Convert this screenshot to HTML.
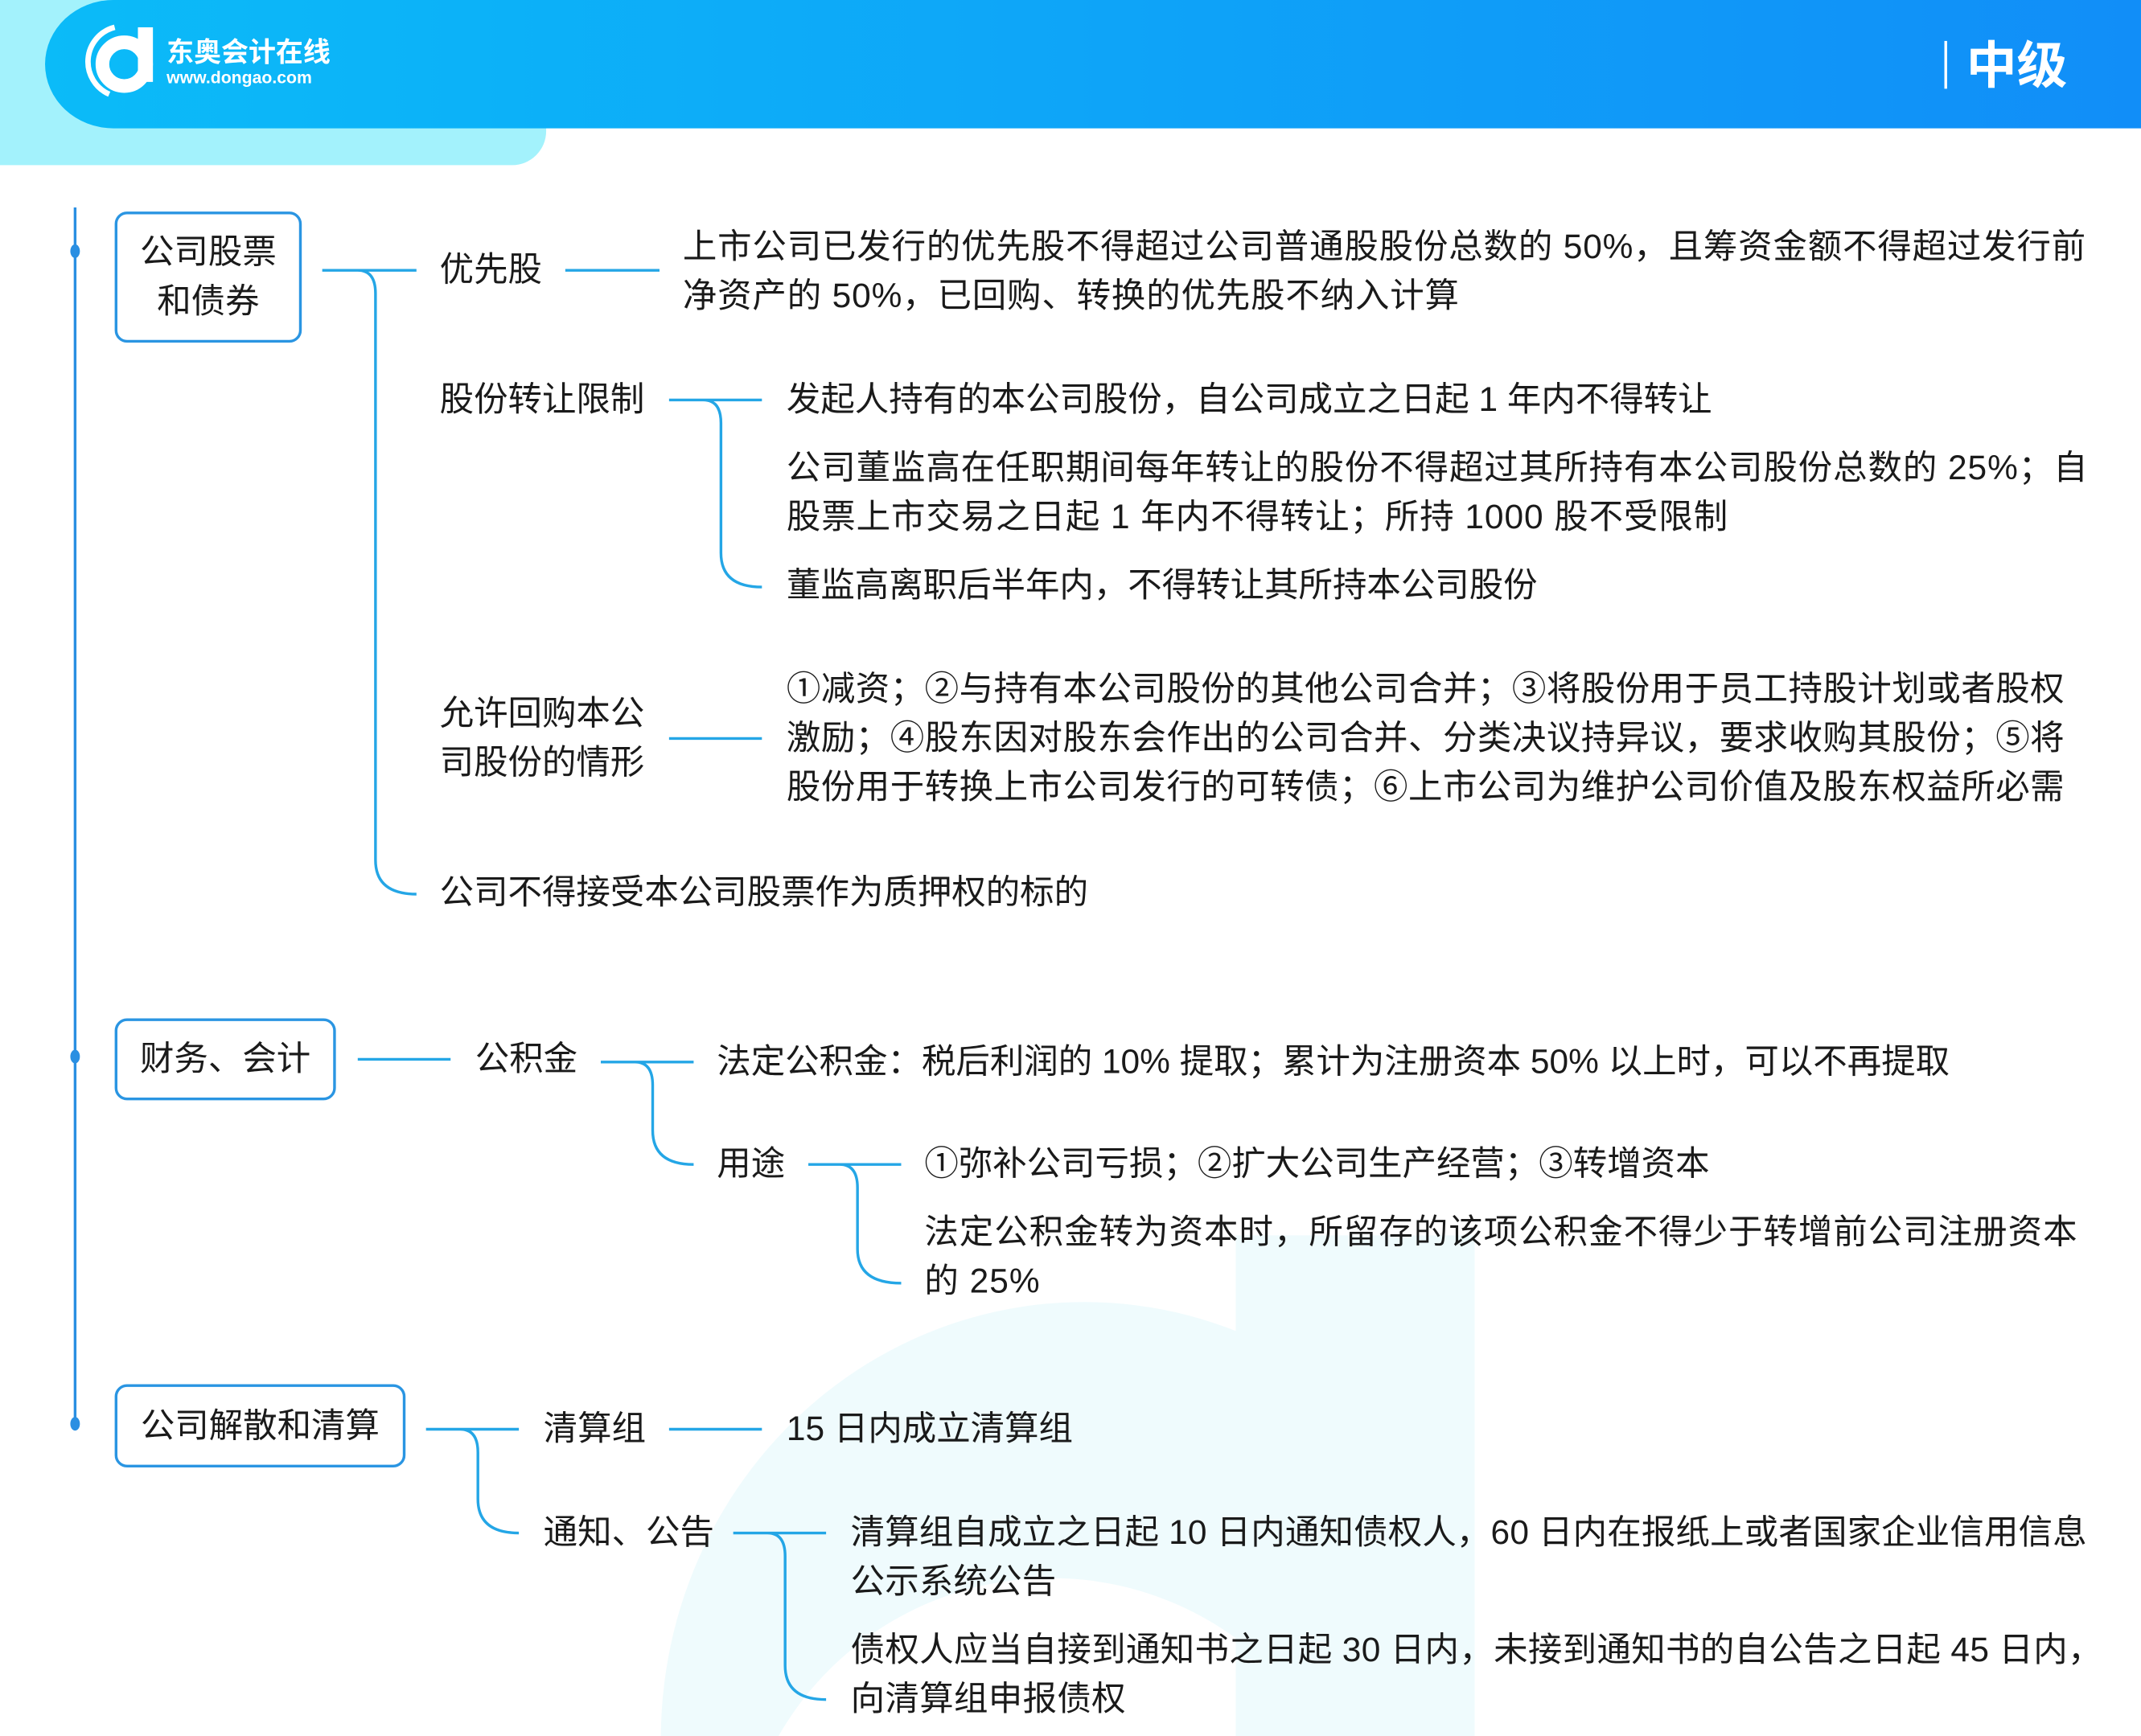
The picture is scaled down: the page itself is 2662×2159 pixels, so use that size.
<!DOCTYPE html>
<html><head><meta charset="utf-8"><style>
html,body{margin:0;padding:0;background:#fff;}
body{width:2662px;height:2159px;overflow:hidden;position:relative;}
#w{position:absolute;left:0;top:0;width:1568px;height:1272px;transform:scale(1.69770);transform-origin:0 0;font-family:"Liberation Sans","Noto Sans CJK SC",sans-serif;color:#1a1a1a;}
.t{position:absolute;font-size:25px;line-height:36px;white-space:nowrap;}
.box{position:absolute;border:2px solid #2a95e2;border-radius:9px;box-sizing:border-box;font-size:25px;line-height:36px;text-align:center;display:flex;align-items:center;justify-content:center;background:#fff;}
</style></head><body><div id="w">
<svg width="1568" height="1272" style="position:absolute;left:0;top:0">
<defs><linearGradient id="g" x1="0" x2="1"><stop offset="0" stop-color="#0bbbf8"/><stop offset="1" stop-color="#118ef8"/></linearGradient></defs>
<path d="M484 1272 A310 320 0 0 1 905 975 V905 H1080 V1272 H905 V1200 A230 230 0 0 0 570 1272 Z" fill="#effbfd"/>
<path d="M0 0 H400 V96 A25 25 0 0 1 375 121 H0 Z" fill="#a3f2fc"/>
<path d="M83 0 H1568 V94 H83 A50 47 0 0 1 33 47 A50 47 0 0 1 83 0 Z" fill="url(#g)"/>
<circle cx="91" cy="47" r="16" fill="none" stroke="#fff" stroke-width="10"/>
<path d="M80 69 A26 26 0 0 1 84 20" fill="none" stroke="#fff" stroke-width="4"/>
<rect x="101" y="20" width="11" height="40" fill="#fff"/>
<rect x="1424" y="30" width="2" height="35" fill="#fff"/>
<g stroke="#2a8fe2" stroke-width="2" fill="none"><path d="M55 152 V1045"/></g>
<g fill="#2a8fe2"><ellipse cx="55" cy="184" rx="3.5" ry="5"/><ellipse cx="55" cy="774" rx="3.5" ry="5"/><ellipse cx="55" cy="1043" rx="3.5" ry="5"/></g>
<g stroke="#24a6e6" stroke-width="2" fill="none">
<path d="M236 198 H305 M262 198 Q275 198 275 215 V630 Q275 655 305 655"/>
<path d="M414 198 H483"/>
<path d="M490 293 H558 M515 293 Q528 293 528 310 V405 Q528 430 558 430"/>
<path d="M490 541 H558"/>
<path d="M262 776 H330"/>
<path d="M440 778 H508 M465 778 Q478 778 478 795 V828 Q478 853 508 853"/>
<path d="M592 853 H660 M615 853 Q628 853 628 870 V915 Q628 940 660 940"/>
<path d="M312 1047 H380 M337 1047 Q350 1047 350 1064 V1098 Q350 1123 380 1123"/>
<path d="M490 1047 H558"/>
<path d="M537 1123 H605 M562 1123 Q575 1123 575 1140 V1220 Q575 1245 605 1245"/>
</g>
</svg>
<div style="position:absolute;left:122px;top:24px;color:#fff;font-weight:bold;font-size:20px;line-height:26px;font-family:'Noto Sans CJK SC',sans-serif;">东奥会计在线</div>
<div style="position:absolute;left:122px;top:50px;color:#fff;font-weight:bold;font-size:12.5px;line-height:15px;">www.dongao.com</div>
<div style="position:absolute;left:1440px;top:20px;color:#fff;font-weight:bold;font-size:37px;line-height:50px;font-family:'Noto Sans CJK SC',sans-serif;">中级</div>

<div class="box" style="left:84px;top:155px;width:137px;height:96px;">公司股票<br>和债券</div>
<div class="box" style="left:84px;top:746px;width:162px;height:60px;">财务、会计</div>
<div class="box" style="left:84px;top:1014px;width:213px;height:61px;">公司解散和清算</div>

<div class="t" style="left:322px;top:180px">优先股</div>
<div class="t" style="left:500px;top:163px;letter-spacing:0.5px">上市公司已发行的优先股不得超过公司普通股股份总数的 50%，且筹资金额不得超过发行前<br>净资产的 50%，已回购、转换的优先股不纳入计算</div>
<div class="t" style="left:322px;top:275px">股份转让限制</div>
<div class="t" style="left:576px;top:275px">发起人持有的本公司股份，自公司成立之日起 1 年内不得转让</div>
<div class="t" style="left:576px;top:325px;letter-spacing:0.55px">公司董监高在任职期间每年转让的股份不得超过其所持有本公司股份总数的 25%；自<br>股票上市交易之日起 1 年内不得转让；所持 1000 股不受限制</div>
<div class="t" style="left:576px;top:411px">董监高离职后半年内，不得转让其所持本公司股份</div>
<div class="t" style="left:322px;top:505px">允许回购本公<br>司股份的情形</div>
<div class="t" style="left:576px;top:487px;letter-spacing:0.3px">①减资；②与持有本公司股份的其他公司合并；③将股份用于员工持股计划或者股权<br>激励；④股东因对股东会作出的公司合并、分类决议持异议，要求收购其股份；⑤将<br>股份用于转换上市公司发行的可转债；⑥上市公司为维护公司价值及股东权益所必需</div>
<div class="t" style="left:322px;top:636px">公司不得接受本公司股票作为质押权的标的</div>

<div class="t" style="left:348px;top:758px">公积金</div>
<div class="t" style="left:525px;top:760px">法定公积金：税后利润的 10% 提取；累计为注册资本 50% 以上时，可以不再提取</div>
<div class="t" style="left:525px;top:835px">用途</div>
<div class="t" style="left:677px;top:835px">①弥补公司亏损；②扩大公司生产经营；③转增资本</div>
<div class="t" style="left:677px;top:885px;letter-spacing:0.6px">法定公积金转为资本时，所留存的该项公积金不得少于转增前公司注册资本<br>的 25%</div>

<div class="t" style="left:398px;top:1029px">清算组</div>
<div class="t" style="left:576px;top:1029px">15 日内成立清算组</div>
<div class="t" style="left:398px;top:1105px">通知、公告</div>
<div class="t" style="left:623px;top:1105px;letter-spacing:0.1px">清算组自成立之日起 10 日内通知债权人，60 日内在报纸上或者国家企业信用信息<br>公示系统公告</div>
<div class="t" style="left:623px;top:1191px;letter-spacing:0.2px">债权人应当自接到通知书之日起 30 日内，未接到通知书的自公告之日起 45 日内，<br>向清算组申报债权</div>
</div></body></html>
